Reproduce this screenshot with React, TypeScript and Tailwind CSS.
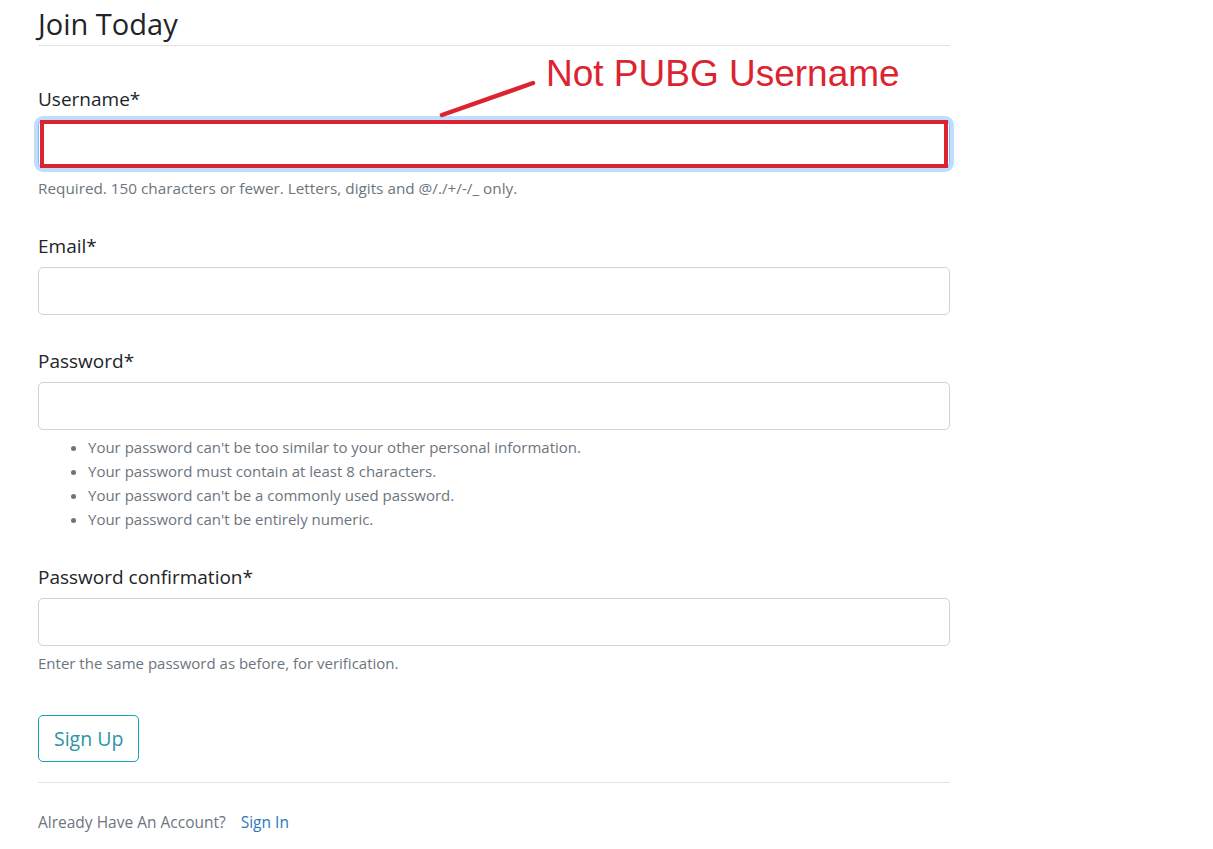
import React from "react";

const font = { fontFamily: "'Open Sans', 'Noto Sans', sans-serif" };

function Field({
  label,
  type = "text",
  children,
}: {
  label: string;
  type?: string;
  children?: React.ReactNode;
}) {
  return (
    <div className="mb-[27px]">
      <label className="mb-[6px] block pt-[4px] text-[19px] leading-[30px] text-[#212529]">{label}</label>
      <input
        type={type}
        className="block h-[48px] w-full rounded-[5px] border border-[#ced4da] bg-white px-3 outline-none"
      />
      {children}
    </div>
  );
}

export default function App() {
  return (
    <div className="min-h-screen bg-white" style={font}>
      <div className="relative w-[950px] pl-[38px]">
        {/* Heading */}
        <div className="mb-[34px] border-b border-[#e3e3e3] pt-[6px] pb-[3px]">
          <h1 className="text-[29px] leading-[36px] text-[#212529]">Join Today</h1>
        </div>

        {/* Username */}
        <div className="mb-[27px]">
          <label className="mb-[6px] block pt-[4px] text-[19px] leading-[30px] text-[#212529]">Username*</label>
          <input
            type="text"
            className="block h-[48px] w-full rounded-[5px] border border-[#80bdff] bg-white px-3 shadow-[0_0_0_4px_rgba(0,123,255,0.25)] outline-none"
          />
          <p className="mt-[8px] text-[15.3px] leading-[24px] text-[#6c757d]">
            Required. 150 characters or fewer. Letters, digits and @/./+/-/_ only.
          </p>
        </div>

        <Field label="Email*" type="email" />

        <Field label="Password*" type="password">
          <ul className="mt-[5px] list-disc pl-[50px] text-[15px] leading-[24px] text-[#6c757d] marker:text-[#6c757d]">
            <li>Your password can't be too similar to your other personal information.</li>
            <li>Your password must contain at least 8 characters.</li>
            <li>Your password can't be a commonly used password.</li>
            <li>Your password can't be entirely numeric.</li>
          </ul>
        </Field>

        <Field label="Password confirmation*" type="password">
          <p className="mt-[5px] text-[15px] leading-[24px] text-[#6c757d]">
            Enter the same password as before, for verification.
          </p>
        </Field>

        <div className="border-b border-[#e3e3e3] pt-[13px] pb-[20px]">
          <button className="h-[47px] rounded-[5px] border border-[#17a2b8] px-[15px] text-[19.5px] text-[#2a95a6]">
            Sign Up
          </button>
        </div>

        <div className="pt-[27px] text-[15.5px] leading-[24px]">
          <span className="text-[#6c757d]">Already Have An Account?</span>
          <a href="#" className="ml-[15px] text-[#2e78bd]">
            Sign In
          </a>
        </div>

        {/* Annotation overlay */}
        <div className="pointer-events-none absolute left-[40px] top-[120px] h-[48px] w-[908px] border-[4px] border-[#dc2430]" />
        <svg className="pointer-events-none absolute left-0 top-0" width="950" height="130">
          <line x1="442" y1="115" x2="533" y2="83" stroke="#dc2430" strokeWidth="4.5" strokeLinecap="round" />
        </svg>
        <div
          className="pointer-events-none absolute left-[546px] top-[53px] text-[37px] leading-[42px] text-[#dc2430]"
          style={{ fontFamily: "'Liberation Sans', Arial, sans-serif" }}
        >
          Not PUBG Username
        </div>
      </div>
    </div>
  );
}
